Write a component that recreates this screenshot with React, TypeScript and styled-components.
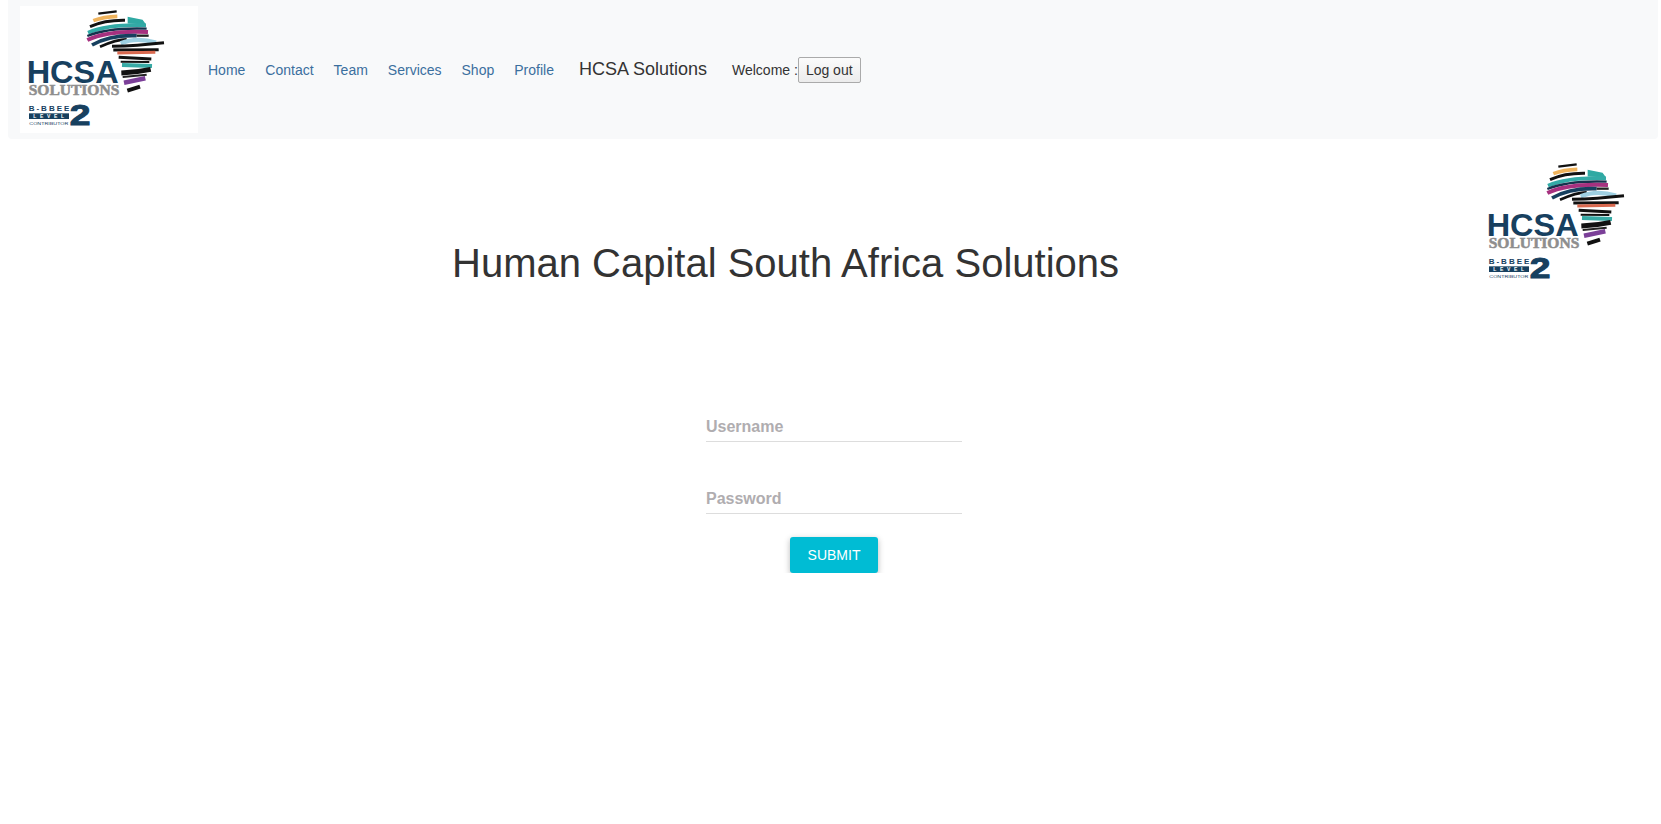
import React from "react"
import styled, { createGlobalStyle } from "styled-components"

const GlobalStyle = createGlobalStyle`
  body {
    margin: 0 3px 0 8px;
    background: #fff;
    font-family: "Liberation Sans", Arial, sans-serif;
    color: #333;
  }
`

const Navbar = styled.nav`
  display: flex;
  align-items: center;
  height: 139px;
  padding: 0 12px;
  background: #f8f9fa;
  border-radius: 0 0 4px 4px;
`
const NavLinks = styled.ul`
  display: flex;
  gap: 20px;
  list-style: none;
  margin: 0 0 0 10px;
  padding: 0;
`
const NavLink = styled.a`
  color: #3b6f9e;
  font-size: 14px;
  text-decoration: none;
`
const Brand = styled.span`
  margin-left: 25px;
  font-size: 18px;
  color: #333;
`
const Welcome = styled.div`
  display: flex;
  align-items: center;
  margin-left: 25px;
  font-size: 14px;
`
const LogoutButton = styled.button`
  height: 26px;
  padding: 0 7px;
  font-family: inherit;
  font-size: 14px;
  color: #333;
  background: linear-gradient(#fbfbfb, #ececec);
  border: 1px solid #aaa;
  border-radius: 2px;
`
const LogoBox = styled.svg`
  display: block;
  flex: none;
  width: 178px;
  height: 127px;
  background: #fff;
`
const Hero = styled.header`
  display: flex;
  justify-content: space-between;
  align-items: flex-start;
  padding-top: 20px;
`
const Heading = styled.h1`
  margin: 82px 0 0 444px;
  font-size: 40px;
  font-weight: 400;
  line-height: 44px;
  color: #333;
`
const LoginForm = styled.form`
  display: flex;
  flex-direction: column;
  align-items: center;
  width: 256px;
  margin: 124px 0 0 698px;
`
const Field = styled.input`
  box-sizing: border-box;
  width: 100%;
  height: 32px;
  margin-bottom: 40px;
  padding: 3px 0 0;
  border: 0;
  border-bottom: 1px solid #ddd;
  outline: none;
  background: transparent;
  font-family: inherit;
  font-size: 16px;
  font-weight: 700;

  &::placeholder {
    color: #b0adb0;
    opacity: 1;
  }
  &:last-of-type {
    margin-bottom: 23px;
  }
`
const SubmitButton = styled.button`
  width: 88px;
  height: 36px;
  border: 0;
  border-radius: 3px;
  background: #00bcd4;
  color: #fff;
  font-family: inherit;
  font-size: 14px;
  box-shadow: 0 2px 6px rgba(0, 0, 0, 0.28);
`

// africa stripes: path, colour, stroke width
const stripes: [string, string, number][] = [
  ["M55 23 L110 16", "#111", 7],
  ["M40 44 Q70 32 112 31", "#efb35c", 11],
  ["M30 62 Q75 42 135 43", "#111", 9],
  ["M146 36 L186 44 L192 52 L146 50Z", "#2fa9a3", 6],
  ["M24 80 Q85 54 198 58", "#33aaa6", 11],
  ["M22 90 Q85 64 200 68", "#15324d", 7],
  ["M22 102 Q85 72 204 78", "#a6317f", 12],
  ["M36 117 Q90 86 170 89", "#17405f", 11],
  ["M170 89 L206 89", "#222", 7],
  ["M60 122 Q110 100 140 100", "#111", 8],
  ["M122 112 Q170 92 228 110", "#9fd0e2", 13],
  ["M96 121 Q170 119 252 110", "#111", 9],
  ["M100 132 L236 131", "#111", 9],
  ["M112 141 L226 139", "#d9694f", 9],
  ["M116 154 L214 159", "#111", 9],
  ["M122 167 L208 168", "#111", 6],
  ["M126 177 L216 180", "#37aaa5", 12],
  ["M124 201 Q170 199 212 190", "#111", 15],
  ["M128 213 L200 206", "#222", 6],
  ["M132 230 L196 217", "#7b3f98", 14],
  ["M142 254 L180 242", "#111", 12],
]

function Logo() {
  return (
    <LogoBox viewBox="60 18 534 381">
      <g transform="translate(240 18)">
        {stripes.map(([d, color, width]) => (
          <path key={d} d={d} stroke={color} strokeWidth={width} fill={d.endsWith("Z") ? color : "none"} />
        ))}
      </g>
      <text x="80" y="250" fontFamily="Liberation Sans" fontWeight="700" fontSize="92" fill="#17405f" textLength="276" lengthAdjust="spacingAndGlyphs">
        HCSA
      </text>
      <text x="86" y="285" fontFamily="Liberation Serif" fontWeight="700" fontSize="42" fill="#8e8e8e" stroke="#8e8e8e" strokeWidth="1.5" textLength="272" lengthAdjust="spacingAndGlyphs">
        SOLUTIONS
      </text>
      <text x="86" y="332" fontFamily="Liberation Sans" fontWeight="700" fontSize="24" fill="#17405f" textLength="122">
        B-BBEE
      </text>
      <rect x="87" y="340" width="120" height="17" fill="#17405f" />
      <text x="100" y="354" fontFamily="Liberation Sans" fontWeight="700" fontSize="15" fill="#fff" textLength="92">
        LEVEL
      </text>
      <text x="88" y="375" fontFamily="Liberation Sans" fontSize="13" fill="#17405f" textLength="117" lengthAdjust="spacingAndGlyphs">
        CONTRIBUTOR
      </text>
      <text x="209" y="374" fontFamily="Liberation Sans" fontWeight="700" fontSize="88" fill="#17405f" stroke="#17405f" strokeWidth="3" textLength="62" lengthAdjust="spacingAndGlyphs">
        2
      </text>
    </LogoBox>
  )
}

const links = ["Home", "Contact", "Team", "Services", "Shop", "Profile"]

export default function App() {
  return (
    <>
      <GlobalStyle />
      <Navbar>
        <Logo />
        <NavLinks>
          {links.map((link) => (
            <li key={link}>
              <NavLink href="#">{link}</NavLink>
            </li>
          ))}
        </NavLinks>
        <Brand>HCSA Solutions</Brand>
        <Welcome>
          Welcome :<LogoutButton type="button">Log out</LogoutButton>
        </Welcome>
      </Navbar>
      <Hero>
        <Heading>Human Capital South Africa Solutions</Heading>
        <Logo />
      </Hero>
      <LoginForm onSubmit={(e) => e.preventDefault()}>
        <Field placeholder="Username" />
        <Field type="password" placeholder="Password" />
        <SubmitButton type="submit">SUBMIT</SubmitButton>
      </LoginForm>
    </>
  )
}
